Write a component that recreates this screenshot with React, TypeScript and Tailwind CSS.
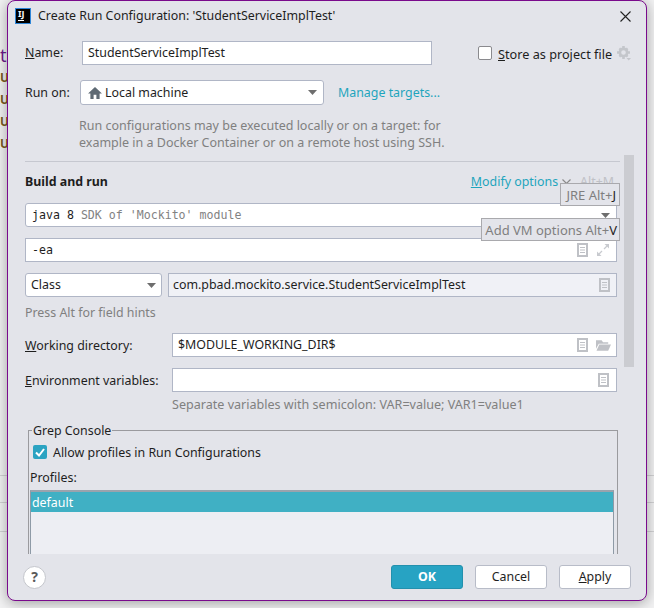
import type { ReactNode } from 'react';

const field = 'flex items-center border border-[#b0b6c6] h-[24px]';

function DocIcon() {
    return (
        <svg width="11" height="14" viewBox="0 0 11 14" className="shrink-0">
            <path d="M0 0H11V14H0Z M2 2V12H9V2Z" fill="#bfc1c6" fillRule="evenodd" />
            <path d="M3 4.5H8M3 7H8M3 9.5H8" stroke="#bfc1c6" strokeWidth="1" />
        </svg>
    );
}

function ExpandIcon() {
    return (
        <svg width="12" height="12" viewBox="0 0 12 12" className="shrink-0">
            <path d="M7.5 0H12V4.5Z" fill="#c8cacf" />
            <path d="M10 2L7 5" stroke="#c8cacf" strokeWidth="1.3" />
            <path d="M0 7.5V12H4.5Z" fill="#c8cacf" />
            <path d="M2 10L5 7" stroke="#c8cacf" strokeWidth="1.3" />
        </svg>
    );
}

function FolderIcon() {
    return (
        <svg width="15" height="11" viewBox="0 0 16 11" className="shrink-0">
            <path d="M0 0H6L7.5 2H13V3.5H3L0 9Z" fill="#bfc1c6" />
            <path d="M3.5 4.5H16L13 11H0.5Z" fill="#bfc1c6" />
        </svg>
    );
}

function GearIcon() {
    return (
        <svg width="14" height="15" viewBox="0 0 14 15" className="shrink-0">
            <circle cx="6.5" cy="6.5" r="3.6" fill="none" stroke="#c4c6cb" strokeWidth="2.6" />
            <path d="M5.2 0H7.8V2.5H5.2ZM5.2 10.5H7.8V13H5.2ZM0 5.2H2.5V7.8H0ZM10.5 5.2H13V7.8H10.5ZM1.6 3.2L3.2 1.6L4.6 3L3 4.6ZM8.4 10L10 8.4L11.4 9.8L9.8 11.4ZM9.8 1.6L11.4 3.2L10 4.6L8.4 3ZM3 8.4L4.6 10L3.2 11.4L1.6 9.8Z" fill="#c4c6cb" />
            <path d="M9.5 12H14L11.75 14.5Z" fill="#c4c6cb" />
        </svg>
    );
}

function Arrow() {
    return (
        <svg width="9" height="5" viewBox="0 0 9 5" className="shrink-0">
            <path d="M0 0H9L4.5 5Z" fill="#6e6e6e" />
        </svg>
    );
}

function Label({ children, w }: { children: ReactNode; w: string }) {
    return <div className={`shrink-0 ${w}`}>{children}</div>;
}

function Tip({ className, children }: { className: string; children: ReactNode }) {
    return (
        <div className={`absolute h-[23px] flex items-center justify-end bg-[#e3e4ea] border border-[#a9a9ad] text-[13px] text-[#7f7f7f] whitespace-nowrap ${className}`}>
            {children}
        </div>
    );
}

export default function App() {
    return (
        <div
            className="relative w-[654px] h-[608px] overflow-hidden bg-[#f2f2f3] text-[12.4px] leading-[18px] text-[#1e1e1e]"
            style={{ fontFamily: '"Noto Sans", sans-serif' }}
        >
            {/* editor behind the dialog */}
            <div className="absolute left-0 top-[46px] text-[18px] text-[#6b1b8a]">t</div>
            <div className="absolute left-0 top-[69px] flex flex-col gap-[4px] text-[12px] font-bold text-[#7a5a20]">
                <span>U</span>
                <span>U</span>
                <span>U</span>
                <span>U</span>
            </div>
            <div className="absolute left-0 right-0 top-[475px] h-px bg-[#d2d2d4]" />
            <div className="absolute left-0 right-0 top-[502px] h-px bg-[#d2d2d4]" />
            <div className="absolute left-0 right-0 top-[531px] h-px bg-[#d2d2d4]" />

            <div className="pl-[7px]">
                <div className="relative w-[640px] h-[601px] flex flex-col bg-[#e3e4ea] border border-[#7a0a8c] rounded-[8px] overflow-hidden shadow-[0_2px_14px_rgba(0,0,0,0.35)]">
                    {/* title bar */}
                    <div className="shrink-0 h-[30px] flex items-center pl-[7px] pr-[15px]">
                        <div className="w-[16px] h-[16px] bg-black border border-[#2f86d8] flex flex-col pl-[2px] shrink-0">
                            <span className="text-white text-[9px] leading-[10px] font-bold">IJ</span>
                            <span className="mt-[1px] w-[6px] h-px bg-white" />
                        </div>
                        <div className="ml-[7px] flex-1 whitespace-nowrap">Create Run Configuration: 'StudentServiceImplTest'</div>
                        <svg width="11" height="11" viewBox="0 0 11 11" className="shrink-0">
                            <path d="M0.5 0.5L10.5 10.5M10.5 0.5L0.5 10.5" stroke="#222" strokeWidth="1.1" />
                        </svg>
                    </div>

                    {/* form */}
                    <div className="relative shrink-0 h-[523px] overflow-hidden pl-[17px]">
                        <div className="pt-[10px] flex items-center">
                            <Label w="w-[57px]"><u>N</u>ame:</Label>
                            <div className={`${field} bg-white w-[350px] pl-[5px]`}>StudentServiceImplTest</div>
                            <div className="ml-[46px] w-[14px] h-[14px] bg-white border border-[#8a8a8e] rounded-[2px] shrink-0" />
                            <div className="ml-[6px] pt-[2px] text-[12.7px] whitespace-nowrap"><u>S</u>tore as project file</div>
                            <div className="ml-[5px]"><GearIcon /></div>
                        </div>

                        <div className="mt-[15px] flex items-center">
                            <Label w="w-[55px]">Run on:</Label>
                            <div className={`${field} bg-white w-[244px] h-[25px] rounded-[3px] pl-[7px] pr-[6px]`}>
                                <svg width="14" height="12" viewBox="0 0 15 13" className="shrink-0">
                                    <path d="M7.5 0L15 7H12.5V13H9V8.5H6V13H2.5V7H0Z" fill="#5f6a74" />
                                </svg>
                                <span className="ml-[3px] flex-1">Local machine</span>
                                <Arrow />
                            </div>
                            <div className="ml-[14px] text-[#1fa5bd] whitespace-nowrap">Manage targets...</div>
                        </div>

                        <div className="mt-[12px] ml-[54px] text-[12.5px] text-[#808080] leading-[17px] whitespace-nowrap">
                            <div>Run configurations may be executed locally or on a target: for</div>
                            <div>example in a Docker Container or on a remote host using SSH.</div>
                        </div>

                        <div className="mt-[10px] w-[595px] h-px bg-[#c6c8d0]" />

                        <div className="mt-[11px] flex items-center w-[591px]">
                            <div className="font-bold flex-1">Build and run</div>
                            <div className="text-[#1fa5bd] whitespace-nowrap"><u>M</u>odify options</div>
                            <svg width="9" height="6" viewBox="0 0 9 6" className="ml-[4px] shrink-0">
                                <path d="M0.5 0.5L4.5 4.5L8.5 0.5" fill="none" stroke="#8a8a8a" strokeWidth="1.2" />
                            </svg>
                            <div className="ml-[9px] mr-[2px] text-[#c0c1c6] whitespace-nowrap">Alt+M</div>
                        </div>

                        <div className={`${field} bg-white mt-[12px] w-[592px] rounded-[3px] pl-[6px] pr-[6px] text-[11.6px]`} style={{ fontFamily: '"DejaVu Sans Mono", monospace' }}>
                            <span>java 8</span>
                            <span className="ml-[7px] flex-1 text-[#828282]">SDK of 'Mockito' module</span>
                            <Arrow />
                        </div>

                        <div className={`${field} bg-white mt-[11px] w-[592px] pl-[6px] pr-[7px] text-[11.6px]`} style={{ fontFamily: '"DejaVu Sans Mono", monospace' }}>
                            <span className="flex-1">-ea</span>
                            <span className="mr-[9px]"><DocIcon /></span>
                            <ExpandIcon />
                        </div>

                        <div className="mt-[11px] flex gap-[6px] w-[592px]">
                            <div className={`${field} bg-white w-[137px] rounded-[3px] pl-[5px] pr-[5px]`}>
                                <span className="flex-1">Class</span>
                                <Arrow />
                            </div>
                            <div className={`${field} bg-[#f0f1f6] flex-1 pl-[4px] pr-[6px]`}>
                                <span className="flex-1">com.pbad.mockito.service.StudentServiceImplTest</span>
                                <DocIcon />
                            </div>
                        </div>

                        <div className="mt-[7px] text-[#808080]">Press Alt for field hints</div>

                        <div className="mt-[11px] flex items-center w-[592px]">
                            <Label w="w-[147px] pt-[2px]"><u>W</u>orking directory:</Label>
                            <div className={`${field} bg-white flex-1 pl-[5px] pr-[5px]`}>
                                <span className="flex-1">$MODULE_WORKING_DIR$</span>
                                <span className="mr-[8px]"><DocIcon /></span>
                                <FolderIcon />
                            </div>
                        </div>

                        <div className="mt-[11px] flex items-center w-[592px]">
                            <Label w="w-[147px] pt-[2px]"><u>E</u>nvironment variables:</Label>
                            <div className={`${field} bg-white flex-1 justify-end pr-[7px]`}>
                                <DocIcon />
                            </div>
                        </div>

                        <div className="mt-[4px] ml-[147px] text-[12.57px] text-[#808080] whitespace-nowrap">Separate variables with semicolon: VAR=value; VAR1=value1</div>

                        {/* grep console group */}
                        <div className="relative mt-[16px] ml-[3px] w-[590px] h-[140px] border border-[#9a9a9e] border-b-0 px-[1px]">
                            <div className="absolute left-[3px] top-[-9px] px-[1px] bg-[#e3e4ea]">Grep Console</div>
                            <div className="mt-[11px] ml-[3px] flex items-center">
                                <div className="w-[14px] h-[14px] rounded-[2px] bg-[#2ba3c2] flex items-center justify-center shrink-0">
                                    <svg width="10" height="9" viewBox="0 0 10 9">
                                        <path d="M1 4.5L4 7.5L9 1" fill="none" stroke="#fff" strokeWidth="2" />
                                    </svg>
                                </div>
                                <span className="ml-[6px] pt-[2px]">Allow profiles in Run Configurations</span>
                            </div>
                            <div className="mt-[7px]">Profiles:</div>
                            <div className="mt-[3px] h-[70px] mr-[2px] bg-[#edeef3] border-t-2 border-x border-[#8e9aa6] border-t-[#9aa3ad]">
                                <div className="h-[20px] bg-[#40b0c4] text-white pl-[1px] leading-[22px]">default</div>
                            </div>
                        </div>

                        {/* scrollbar */}
                        <div className="absolute left-[616px] top-[124px] w-[10px] h-[212px] bg-[#cbccd1]" />

                        {/* shortcut hints */}
                        <Tip className="left-[552px] top-[152px] w-[60px] pr-[3px]">JRE Alt+<span className="text-[#1e1e1e]">J</span></Tip>
                        <Tip className="left-[473px] top-[187px] w-[139px] pr-[2px]">Add VM options Alt+<span className="text-[#1e1e1e]">V</span></Tip>
                    </div>

                    {/* footer */}
                    <div className="flex-1 flex items-center pl-[15px] pr-[15px]">
                        <div className="w-[23px] h-[23px] rounded-full bg-white border border-[#c4c6cc] flex items-center justify-center font-bold text-[14px] text-[#5a5a5a]">?</div>
                        <div className="ml-auto flex gap-[12px]">
                            <button className="w-[72px] h-[24px] rounded-[3px] bg-[#27a3c3] border border-[#2390ad] text-white font-bold">OK</button>
                            <button className="w-[72px] h-[24px] rounded-[3px] bg-white border border-[#b8bcc8]">Cancel</button>
                            <button className="w-[72px] h-[24px] rounded-[3px] bg-white border border-[#b8bcc8]"><u>A</u>pply</button>
                        </div>
                    </div>
                </div>
            </div>
        </div>
    );
}
